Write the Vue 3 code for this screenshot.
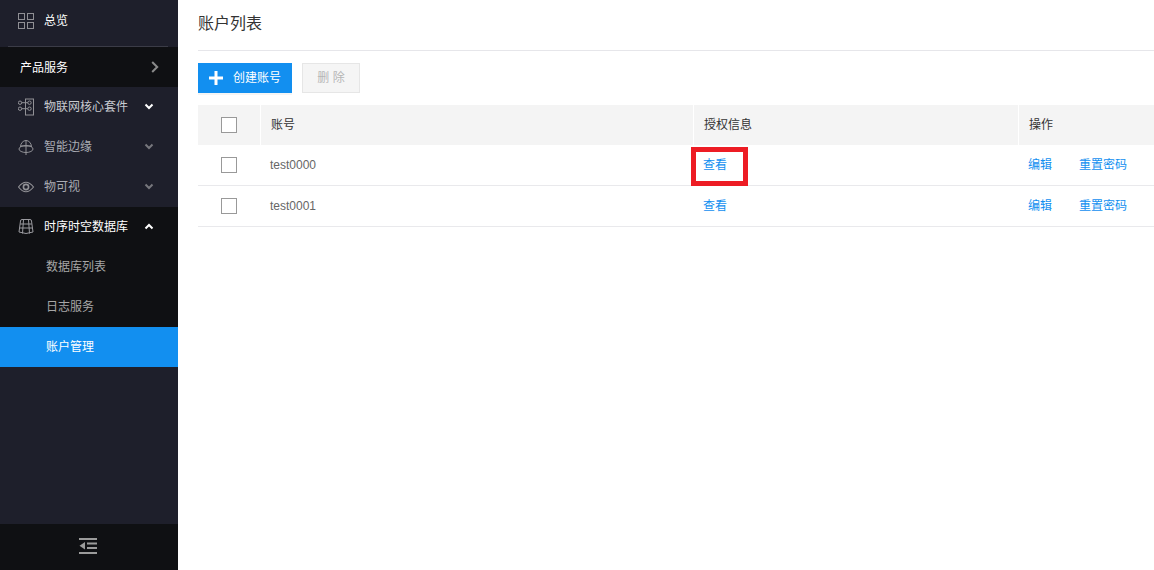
<template>
  <div class="page">
    <aside class="sidebar">
      <div class="nav-scroll">
        <div class="overview">
          <svg class="overview-icon" viewBox="0 0 16 16" fill="none" stroke="#8f8f94" stroke-width="1">
            <rect x="0.500" y="0.500" width="6" height="6" />
            <rect x="9.500" y="0.500" width="6" height="6" />
            <rect x="0.500" y="9.500" width="6" height="6" />
            <rect x="9.500" y="9.500" width="6" height="6" />
          </svg>
          <span class="overview-text">总览</span>
        </div>
        <div class="product-row">
          <span class="product-text">产品服务</span>
          <svg class="product-arrow" viewBox="0 0 8 12" fill="none" stroke="#8a8a8a" stroke-width="2">
            <path d="M1.200 1 L6.200 6 L1.200 11" />
          </svg>
        </div>

        <div v-for="item in menus" :key="item.name" class="menu-row" :class="{ open: item.open, lit: item.lit }">
          <svg class="nav-icon" viewBox="0 0 18 18" fill="none" stroke="#919196" stroke-width="1">
            <template v-if="item.icon === 'kit'">
              <rect x="7.500" y="1" width="8" height="16" />
              <circle cx="2" cy="4.700" r="1.700" />
              <circle cx="2" cy="10.700" r="1.700" />
              <circle cx="11.500" cy="4.700" r="1.700" />
              <circle cx="11.500" cy="10.700" r="1.700" />
              <path d="M3.700 4.700 H9.800 M3.700 10.700 H9.800" />
            </template>
            <template v-else-if="item.icon === 'edge'">
              <path d="M2.500 9 A5.500 6.500 0 0 1 13.500 9" />
              <ellipse cx="8" cy="11" rx="7" ry="3.500" />
              <path d="M8 2 V17 M3 8 H13" />
            </template>
            <template v-else-if="item.icon === 'eye'">
              <path d="M0.500 9 Q8 -0.500 15.500 9 Q8 18.500 0.500 9 Z" stroke-width="1.200" />
              <circle cx="8" cy="9" r="2.600" stroke-width="1.600" />
            </template>
            <template v-else>
              <path d="M4 1.500 H12 Q13.500 1.500 13.500 3 L15 14 Q8 17 1 14 L2.500 3 Q2.500 1.500 4 1.500 Z" stroke="#9a9a9f" />
              <path d="M2.200 6 H13.800 M1.600 10 H14.400 M5.500 1.500 L4.500 15.500 M10.500 1.500 L11.500 15.500" stroke="#9a9a9f" />
            </template>
          </svg>
          <span class="menu-text">{{ item.name }}</span>
          <svg class="menu-arrow" viewBox="0 0 10 7" fill="none" stroke-width="2">
            <path :d="item.open ? 'M1.500 5.500 L5 2 L8.500 5.500' : 'M1.500 1.500 L5 5 L8.500 1.500'" />
          </svg>
        </div>

        <div class="sub-list">
          <div v-for="sub in subMenus" :key="sub" class="sub-row" :class="{ active: sub === '账户管理' }">{{ sub }}</div>
        </div>
      </div>
      <div class="collapse-bar">
        <svg class="collapse-icon" viewBox="0 0 18 16" fill="#9b9b9b">
          <rect x="0" y="0" width="18" height="2" />
          <rect x="8" y="4.500" width="10" height="2" />
          <rect x="8" y="9" width="10" height="2" />
          <rect x="0" y="14" width="18" height="2" />
          <path d="M6 4 V11.500 L0.500 7.750 Z" />
        </svg>
      </div>
    </aside>

    <main class="content">
      <h1 class="title">账户列表</h1>
      <div class="toolbar">
        <button class="btn-create">
          <svg class="plus" viewBox="0 0 14 14" fill="#fff">
            <rect x="5.500" y="0" width="3" height="14" />
            <rect x="0" y="5.500" width="14" height="3" />
          </svg>
          创建账号
        </button>
        <button class="btn-delete">删 除</button>
      </div>

      <div class="table">
        <div class="tr head">
          <div class="td check"><span class="checkbox"></span></div>
          <div class="td account">账号</div>
          <div class="td auth">授权信息</div>
          <div class="td ops">操作</div>
        </div>
        <div v-for="(row, i) in rows" :key="row" class="tr">
          <div class="td check"><span class="checkbox"></span></div>
          <div class="td account">{{ row }}</div>
          <div class="td auth">
            <a class="link">查看</a>
            <span v-if="i === 0" class="highlight"></span>
          </div>
          <div class="td ops">
            <a class="link">编辑</a>
            <a class="link">重置密码</a>
          </div>
        </div>
      </div>
    </main>
  </div>
</template>

<script setup>
const menus = [
  { name: '物联网核心套件', icon: 'kit', lit: true },
  { name: '智能边缘', icon: 'edge' },
  { name: '物可视', icon: 'eye' },
  { name: '时序时空数据库', icon: 'db', open: true }
]

const subMenus = ['数据库列表', '日志服务', '账户管理']

const rows = ['test0000', 'test0001']
</script>

<style>
html,
body {
  margin: 0;
  background: #fff;
}
</style>

<style scoped>
.page {
  display: flex;
  width: 1154px;
  height: 570px;
  overflow: hidden;
  font-family: "Liberation Sans", "Noto Sans CJK SC", sans-serif;
  font-size: 12px;
}

.sidebar {
  width: 178px;
  flex-shrink: 0;
  display: flex;
  flex-direction: column;
  background: #1e1f2b;
}

.nav-scroll {
  flex: 1;
}

.overview {
  height: 42px;
  line-height: 42px;
  margin: 0 10px 0 8px;
  padding: 0 0 4px 10px;
  display: flex;
  align-items: center;
  border-bottom: 1px solid #3b3c47;
}

.overview-icon {
  width: 16px;
  height: 16px;
  flex-shrink: 0;
}

.nav-icon {
  width: 18px;
  height: 18px;
  flex-shrink: 0;
}

.overview-text {
  margin-left: 10px;
  color: #fff;
}

.product-row {
  height: 40px;
  line-height: 40px;
  padding: 0 19px 0 20px;
  display: flex;
  align-items: center;
  justify-content: space-between;
  background: #0f1013;
  color: #fff;
}

.product-text {
  margin-top: 2px;
}

.product-arrow {
  width: 8px;
  height: 12px;
}

.menu-row {
  height: 40px;
  line-height: 40px;
  padding: 0 24px 0 18px;
  display: flex;
  align-items: center;
  color: #a9abb3;
}

.menu-row.lit {
  color: #c8cad0;
}

.menu-row.open {
  background: #0f1013;
  color: #fff;
}

.menu-text {
  flex: 1;
  margin-left: 8px;
}

.menu-arrow {
  width: 10px;
  height: 7px;
  margin-bottom: 2px;
  stroke: #77777d;
}

.menu-row.lit .menu-arrow,
.menu-row.open .menu-arrow {
  stroke: #fff;
}

.sub-list {
  background: #0f1013;
}

.sub-row {
  height: 40px;
  line-height: 40px;
  padding-left: 46px;
  color: #a6a6a6;
}

.sub-row.active {
  background: #128ff0;
  color: #fff;
}

.collapse-bar {
  height: 46px;
  box-sizing: border-box;
  padding: 0 2px 2px 0;
  display: flex;
  align-items: center;
  justify-content: center;
  background: #0f1013;
}

.collapse-icon {
  width: 18px;
  height: 16px;
}

.content {
  flex: 1;
  padding-left: 20px;
  min-width: 0;
}

.title {
  margin: 0;
  height: 50px;
  line-height: 48px;
  font-size: 16px;
  font-weight: 400;
  color: #333;
  border-bottom: 1px solid #e6e6ea;
}

.toolbar {
  display: flex;
  gap: 10px;
  padding: 12px 0;
}

button {
  height: 30px;
  line-height: 28px;
  padding: 0;
  border: 0;
  font-family: inherit;
  font-size: 12px;
}

.btn-create {
  width: 94px;
  line-height: 30px;
  display: flex;
  align-items: center;
  justify-content: center;
  gap: 10px;
  background: #128ff0;
  color: #fff;
  box-shadow: 0 2px 0 #f5f5f5;
}

.plus {
  width: 14px;
  height: 14px;
}

.btn-delete {
  width: 58px;
  background: #f5f5f5;
  border: 1px solid #e6e6e6;
  color: #b5b5b5;
}

.table {
  color: #666;
  line-height: 40px;
}

.tr {
  display: flex;
  height: 41px;
  box-sizing: border-box;
  border-bottom: 1px solid #e9e9ec;
}

.tr.head {
  height: 40px;
  border-bottom: 0;
  background: #f4f4f4;
  color: #333;
}

.td {
  display: flex;
  align-items: center;
  box-sizing: border-box;
  position: relative;
}

.check {
  width: 62px;
  padding-left: 23px;
}

.account {
  width: 433px;
  padding-left: 10px;
}

.auth {
  width: 325px;
  padding-left: 10px;
}

.ops {
  flex: 1;
  padding-left: 10px;
  gap: 27px;
}

.head .account,
.head .auth,
.head .ops {
  border-left: 1px solid #fff;
}

.checkbox {
  width: 16px;
  height: 16px;
  box-sizing: border-box;
  border: 1px solid #999;
  background: #fff;
}

.link {
  color: #128ff0;
}

.highlight {
  position: absolute;
  left: -2px;
  top: 2px;
  width: 57px;
  height: 39px;
  box-sizing: border-box;
  border: 5px solid #ed1c24;
  pointer-events: none;
}
</style>
